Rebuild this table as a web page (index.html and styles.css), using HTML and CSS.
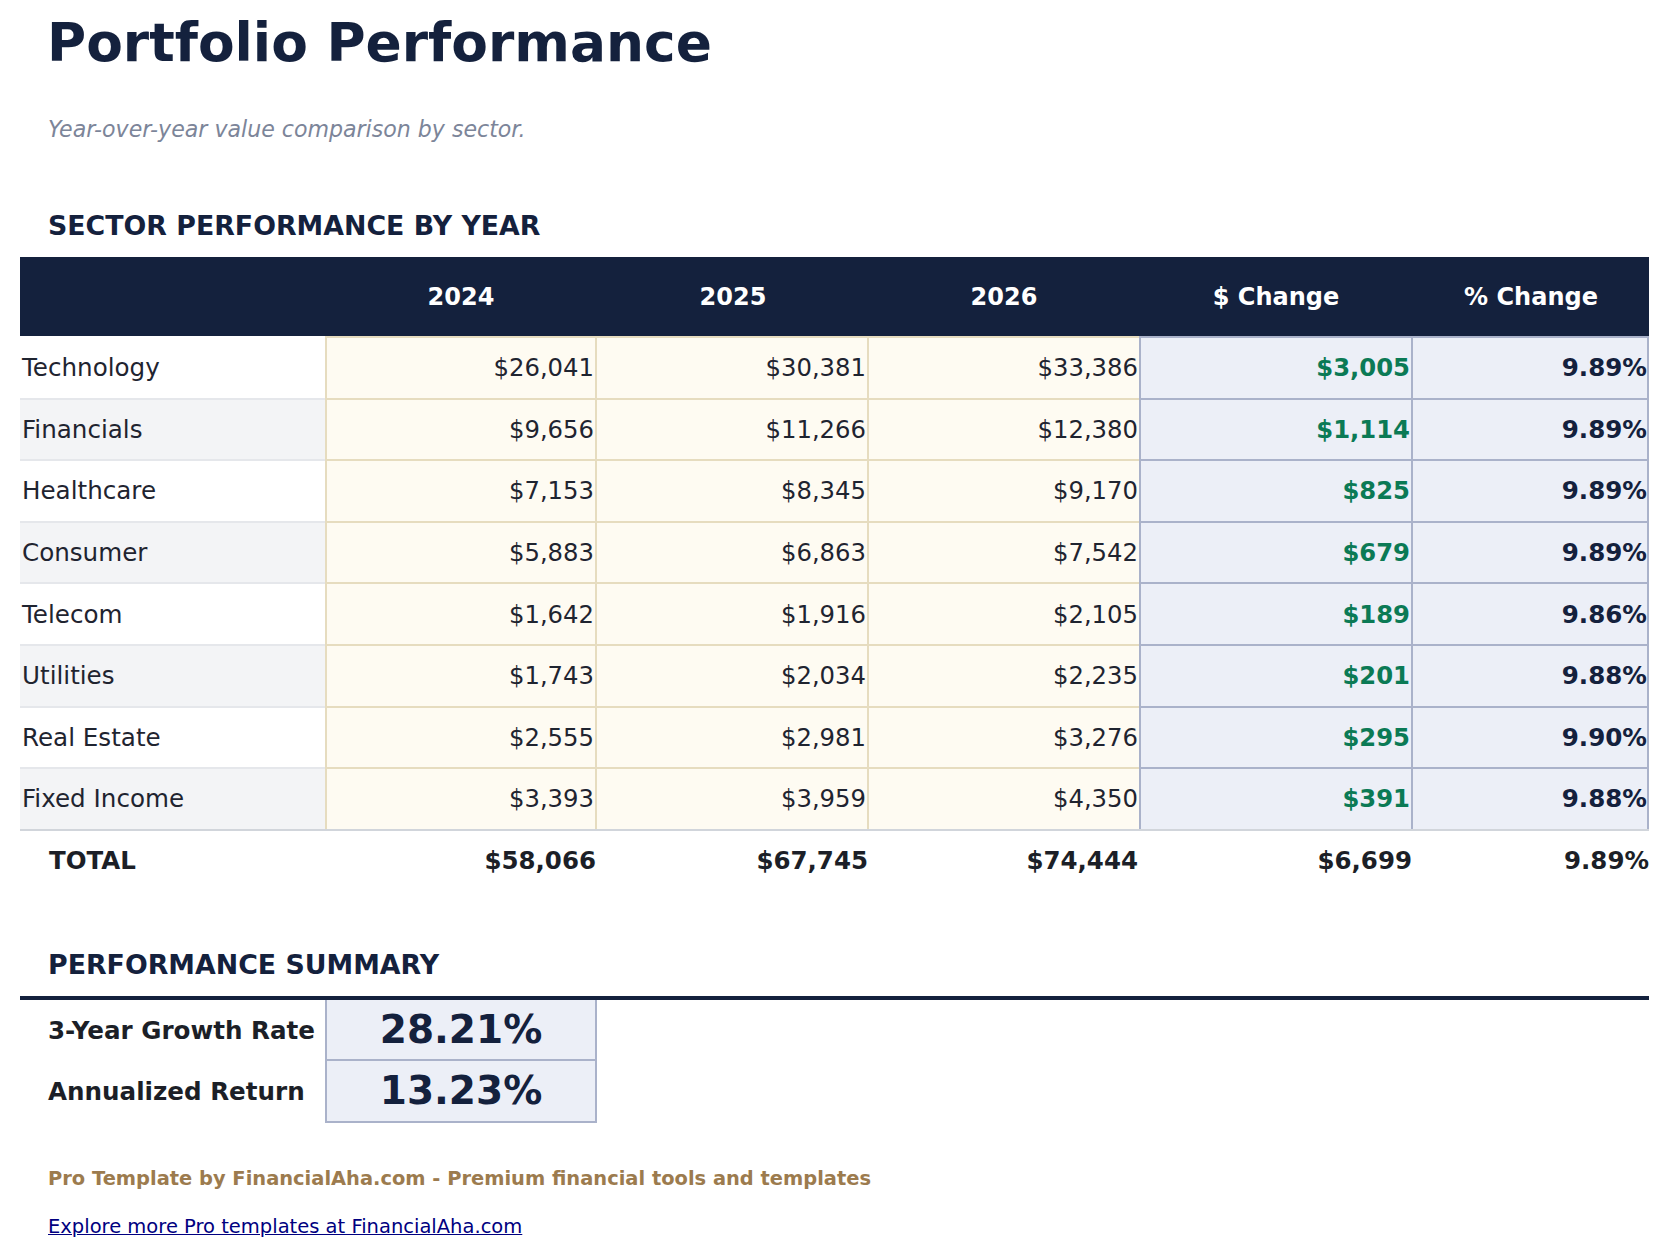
FILE: index.html
```html
<!DOCTYPE html>
<html lang="en">
<head>
<meta charset="utf-8">
<title>Portfolio Performance</title>
<link rel="stylesheet" href="styles.css">
</head>
<body>
<div class="page">
  <h1 class="title">Portfolio Performance</h1>
  <p class="subtitle">Year-over-year value comparison by sector.</p>

  <h2 class="section">SECTOR PERFORMANCE BY YEAR</h2>
  <table class="perf">
    <colgroup>
      <col class="c-name">
      <col class="c-y1">
      <col class="c-y2">
      <col class="c-y3">
      <col class="c-chg">
      <col class="c-pct">
    </colgroup>
    <thead>
      <tr>
        <th></th>
        <th>2024</th>
        <th>2025</th>
        <th>2026</th>
        <th>$ Change</th>
        <th>% Change</th>
      </tr>
    </thead>
    <tbody>
      <tr class="first">
        <td class="name">Technology</td>
        <td class="yv y1">$26,041</td><td class="yv">$30,381</td><td class="yv y3">$33,386</td>
        <td class="bv chg">$3,005</td><td class="bv pct">9.89%</td>
      </tr>
      <tr class="alt">
        <td class="name">Financials</td>
        <td class="yv y1">$9,656</td><td class="yv">$11,266</td><td class="yv y3">$12,380</td>
        <td class="bv chg">$1,114</td><td class="bv pct">9.89%</td>
      </tr>
      <tr>
        <td class="name">Healthcare</td>
        <td class="yv y1">$7,153</td><td class="yv">$8,345</td><td class="yv y3">$9,170</td>
        <td class="bv chg">$825</td><td class="bv pct">9.89%</td>
      </tr>
      <tr class="alt">
        <td class="name">Consumer</td>
        <td class="yv y1">$5,883</td><td class="yv">$6,863</td><td class="yv y3">$7,542</td>
        <td class="bv chg">$679</td><td class="bv pct">9.89%</td>
      </tr>
      <tr>
        <td class="name">Telecom</td>
        <td class="yv y1">$1,642</td><td class="yv">$1,916</td><td class="yv y3">$2,105</td>
        <td class="bv chg">$189</td><td class="bv pct">9.86%</td>
      </tr>
      <tr class="alt">
        <td class="name">Utilities</td>
        <td class="yv y1">$1,743</td><td class="yv">$2,034</td><td class="yv y3">$2,235</td>
        <td class="bv chg">$201</td><td class="bv pct">9.88%</td>
      </tr>
      <tr>
        <td class="name">Real Estate</td>
        <td class="yv y1">$2,555</td><td class="yv">$2,981</td><td class="yv y3">$3,276</td>
        <td class="bv chg">$295</td><td class="bv pct">9.90%</td>
      </tr>
      <tr class="alt last">
        <td class="name">Fixed Income</td>
        <td class="yv y1">$3,393</td><td class="yv">$3,959</td><td class="yv y3">$4,350</td>
        <td class="bv chg">$391</td><td class="bv pct">9.88%</td>
      </tr>
    </tbody>
    <tfoot>
      <tr class="total">
        <td class="total-label">TOTAL</td>
        <td>$58,066</td><td>$67,745</td><td>$74,444</td><td>$6,699</td><td class="total-pct">9.89%</td>
      </tr>
    </tfoot>
  </table>

  <h2 class="section summary-title">PERFORMANCE SUMMARY</h2>
  <table class="summary">
    <colgroup>
      <col class="c-name">
      <col class="c-y1">
      <col>
    </colgroup>
    <tbody>
      <tr class="s1">
        <td class="s-label">3-Year Growth Rate</td>
        <td class="s-value">28.21%</td>
        <td></td>
      </tr>
      <tr class="s2">
        <td class="s-label">Annualized Return</td>
        <td class="s-value">13.23%</td>
        <td></td>
      </tr>
    </tbody>
  </table>

  <p class="credit">Pro Template by FinancialAha.com - Premium financial tools and templates</p>
  <p class="more"><a href="#">Explore more Pro templates at FinancialAha.com</a></p>
</div>
</body>
</html>
```

FILE: styles.css
```css
html, body {
  margin: 0;
  padding: 0;
  background: #ffffff;
}

body {
  font-family: "DejaVu Sans", "Liberation Sans", sans-serif;
  color: #1f2430;
}

.page {
  padding: 11px 21px 0 20px;
}

.title {
  margin: 0;
  padding-left: 27px;
  font-size: 53.4px;
  line-height: 64px;
  font-weight: bold;
  color: #14213d;
}

.subtitle {
  margin: 42px 0 0;
  padding-left: 28px;
  font-size: 22.1px;
  line-height: 25px;
  font-style: italic;
  color: #7c8599;
}

.section {
  margin: 69px 0 0;
  padding-left: 28px;
  font-size: 26.8px;
  line-height: 30px;
  font-weight: bold;
  color: #14213d;
}

.perf {
  margin-top: 16px;
  width: 1629px;
  table-layout: fixed;
  border-collapse: separate;
  border-spacing: 0;
  font-size: 24.3px;
}

.c-name { width: 305px; }
.c-y1 { width: 272px; }
.c-y2 { width: 272px; }
.c-y3 { width: 270px; }
.c-chg { width: 274px; }
.c-pct { width: 236px; }

.perf th {
  height: 79px;
  padding: 0;
  background: #14213d;
  color: #ffffff;
  font-size: 24px;
  font-weight: bold;
  text-align: center;
  vertical-align: middle;
}

.perf td {
  padding: 0 1px 0 2px;
  vertical-align: middle;
  box-sizing: border-box;
}

.perf tbody td {
  border-bottom: 2px solid #e5e7eb;
  height: 61.6px;
}

.perf tbody tr.alt td.name {
  background: #f3f4f6;
}

.perf td.name {
  text-align: left;
  font-size: 24.6px;
  color: #1f2430;
}

.perf td.yv {
  background: #fefbf2;
  text-align: right;
  color: #1f2430;
  border-right: 2px solid #e6dcbf;
  border-bottom-color: #e6dcbf;
}

.perf td.y1 {
  border-left: 2px solid #e6dcbf;
}

.perf td.y3 {
  border-right: none;
}

.perf td.bv {
  background: #eceff7;
  text-align: right;
  font-weight: bold;
  border-right: 2px solid #aab2ca;
  border-bottom-color: #aab2ca;
}

.perf td.chg {
  border-left: 2px solid #aab2ca;
  color: #0b7a55;
}

.perf td.pct {
  color: #14213d;
  font-size: 24.6px;
  padding-right: 0;
}

.perf tr.first td.yv {
  border-top: 2px solid #e6dcbf;
  height: 63.6px;
}

.perf tr.first td.bv {
  border-top: 2px solid #aab2ca;
  height: 63.6px;
}

.perf tr.first td.name {
  padding-top: 2px;
  height: 63.6px;
}

.perf tr.last td {
  border-bottom: none;
  height: 59.6px;
}

.perf tfoot td {
  height: 61px;
  padding-top: 1px;
  border-top: 2px solid #d1d5db;
  font-size: 24.5px;
  font-weight: bold;
  text-align: right;
  color: #1c1f27;
}

.perf tfoot td.total-label {
  text-align: left;
  padding-left: 29px;
}

.perf tfoot td.total-pct {
  padding-right: 0;
}

.summary-title {
  margin-top: 60px;
}

.summary {
  margin-top: 16px;
  width: 1629px;
  table-layout: fixed;
  border-collapse: separate;
  border-spacing: 0;
  border-top: 4px solid #14213d;
}

.summary td {
  padding: 0;
  vertical-align: middle;
  box-sizing: border-box;
}

.summary tr.s1 td { height: 61px; }
.summary tr.s2 td { height: 62px; }

.summary td.s-label {
  padding-left: 28px;
  font-size: 24.6px;
  font-weight: bold;
  color: #1c1f27;
  white-space: nowrap;
}

.summary td.s-value {
  background: #eceff7;
  border-left: 2px solid #aab2ca;
  border-right: 2px solid #aab2ca;
  border-bottom: 2px solid #aab2ca;
  text-align: center;
  font-size: 39px;
  font-weight: bold;
  color: #14213d;
}

.credit {
  margin: 44px 0 0;
  padding-left: 28px;
  font-size: 19.45px;
  line-height: 23px;
  font-weight: bold;
  color: #9c7b4e;
}

.more {
  margin: 25px 0 0;
  padding-left: 28px;
  font-size: 19.5px;
  line-height: 23px;
}

.more a {
  color: #000080;
  text-decoration: underline;
}
```
